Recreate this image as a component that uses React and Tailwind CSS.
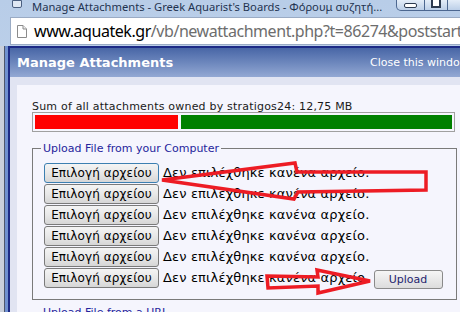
import React from "react";

const rows = [0, 1, 2, 3, 4, 5];

function FileRow({ focused, last }) {
  return (
    <div className="flex h-[20px] items-center">
      <button
        className={
          "h-[20px] w-[115px] shrink-0 rounded-[3px] border bg-gradient-to-b from-[#f4f4f4] via-[#e8e8e8] to-[#d6d6d6] text-[12px] leading-[18px] tracking-[0.1px] text-black " +
          (focused ? "border-[#3c7fb1]" : "border-[#7a7a7a]")
        }
      >
        Επιλογή αρχείου
      </button>
      <span className="ml-[4px] whitespace-nowrap text-[13px] leading-[18px] tracking-[0.15px] text-black">
        Δεν επιλέχθηκε κανένα αρχείο.
      </span>
      {last && (
        <button className="ml-[4px] mt-[3px] h-[19px] w-[69px] shrink-0 rounded-[3px] border border-[#8a8a8a] bg-gradient-to-b from-[#f6f6f6] to-[#dcdcdc] text-[11px] leading-[16px] text-[#1f1f6e]">
          Upload
        </button>
      )}
    </div>
  );
}

export default function App() {
  return (
    <div
      className="relative h-[312px] w-[460px] overflow-hidden bg-gradient-to-b from-[#b8cde8] to-[#c9d9ee]"
      style={{ fontFamily: '"DejaVu Sans", Verdana, sans-serif' }}
    >
      {/* window title bar */}
      <div
        className="flex h-[17px] items-start"
        style={{ fontFamily: '"Noto Sans", "Open Sans", sans-serif' }}
      >
        <div className="ml-[12px] h-[8px] w-[10px] shrink-0 rounded-b-[2px] border border-[#4a5f80] bg-[#dfe8f4]" />
        <span className="ml-[10px] mt-[-1px] w-[364px] shrink-0 overflow-hidden whitespace-nowrap text-[11.2px] leading-[15px] text-[#1f3350]">
          Manage Attachments - Greek Aquarist's Boards - Φόρουμ συζητή...
        </span>
        <div className="flex shrink-0">
          <div className="flex h-[11px] w-[29px] items-center justify-center rounded-bl-[5px] border border-t-0 border-[#4c6790] bg-gradient-to-b from-[#e4edf8] to-[#bccfe8]">
            <div className="h-[5px] w-[13px] rounded-[2px] border border-[#2c3a50] bg-white" />
          </div>
          <div className="flex h-[11px] w-[23px] items-start justify-center border-b border-r border-[#4c6790] bg-gradient-to-b from-[#e4edf8] to-[#bccfe8]">
            <div className="h-[8px] w-[10px] border-2 border-t-0 border-[#2c3a50] bg-white" />
          </div>
          <div className="h-[11px] w-[12px] border-b border-[#4c6790] bg-gradient-to-b from-[#e4edf8] to-[#bccfe8]" />
        </div>
      </div>

      {/* address bar */}
      <div
        className="ml-[10px] flex h-[28px] items-center border border-r-0 border-[#9aabc4] bg-white"
        style={{ fontFamily: '"Noto Sans", "Open Sans", sans-serif' }}
      >
        <svg width="10" height="13" viewBox="0 0 10 13" className="ml-[6px] shrink-0">
          <path d="M0.5 0.5 H6 L9.5 4 V12.5 H0.5 Z" fill="#fff" stroke="#8b8b8b" />
          <path d="M6 0.5 V4 H9.5" fill="#eee" stroke="#8b8b8b" />
        </svg>
        <span className="ml-[7px] whitespace-nowrap text-[16px] leading-[20px] tracking-[-0.45px] text-[#6d6d6d]">
          <span className="text-black">www.aquatek.gr</span>/vb/newattachment.php?t=86274&amp;poststart
        </span>
      </div>

      {/* window frame + page */}
      <div className="mt-[1px] flex">
        <div className="flex h-[270px] shrink-0">
          <div className="w-[4px] bg-[#c9cfdb]" />
          <div className="w-[1px] bg-[#4d566b]" />
          <div className="w-[3px] bg-[#6f90cf]" />
        </div>
        <div className="w-[520px] shrink-0 border-l-2 border-t-2 border-[#1c2a86] bg-[#e1e4f2]">
          {/* header */}
          <div className="flex h-[29px] items-center bg-gradient-to-b from-[#4866a6] to-[#93a8d3] pl-[7px] text-white">
            <span className="w-[353px] shrink-0 text-[13px] font-bold leading-[16px]">
              Manage Attachments
            </span>
            <span className="whitespace-nowrap text-[11px] leading-[14px]">
              Close this window
            </span>
          </div>

          {/* content */}
          <div className="pl-[7px] pt-[8px]">
            <div className="h-[240px] bg-[#f5f5fd] pl-[15px] pt-[15px]">
              <div className="whitespace-nowrap text-[11px] leading-[13px] tracking-[0.2px] text-[#1a1a1a]">
                Sum of all attachments owned by stratigos24: 12,75 MB
              </div>
              <div className="mt-[-1px] flex h-[20px] w-[423px] gap-[3px] border border-[#a0a0a0] p-[2px]">
                <div className="w-[143px] bg-[#ff0000]" />
                <div className="flex-1 bg-[#008000]" />
              </div>

              <fieldset className="mt-[10px] w-[425px] border border-[#7a7a7a] px-[11px] pb-[11px] pt-[8px]">
                <legend className="ml-[-3px] px-[2px] text-[11px] leading-[13px] text-[#25259c]">
                  Upload File from your Computer
                </legend>
                <div className="flex flex-col gap-[1px]">
                  {rows.map((r) => (
                    <FileRow key={r} focused={r === 0} last={r === 5} />
                  ))}
                </div>
              </fieldset>

              <fieldset className="mt-[6px] w-[425px] border border-[#7a7a7a] px-[11px] pb-[10px] pt-[6px]">
                <legend className="ml-[-3px] px-[2px] text-[11px] leading-[13px] text-[#25259c]">
                  Upload File from a URL
                </legend>
                <div className="h-[20px]" />
              </fieldset>
            </div>
          </div>
        </div>
      </div>

      {/* hand-drawn red arrows over the page */}
      <svg
        className="pointer-events-none absolute left-0 top-0"
        width="460"
        height="312"
        viewBox="0 0 460 312"
      >
        <polygon
          points="162,180 295,163 297,172 426,172 426,190 298,192 294,199"
          fill="none"
          stroke="#ed1c24"
          strokeWidth="3.5"
          strokeLinejoin="miter"
        />
        <polygon
          points="267,276 318,277 317,270 370,281 318,293 318,286 268,288"
          fill="none"
          stroke="#ed1c24"
          strokeWidth="3.5"
          strokeLinejoin="miter"
        />
      </svg>
    </div>
  );
}
